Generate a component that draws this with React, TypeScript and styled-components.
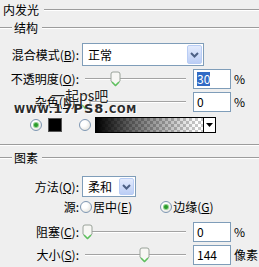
import React from 'react';
import styled, { createGlobalStyle } from 'styled-components';

const Global = createGlobalStyle`
  html, body { margin: 0; padding: 0; background: #efefef; }
  body {
    font-family: "Noto Sans CJK SC", "DejaVu Sans", sans-serif;
    font-size: 12px;
    color: #000;
  }
`;

const Panel = styled.div`
  position: relative;
  width: 259px;
  height: 267px;
  overflow: hidden;
  background: #efefef;
  display: flex;
  flex-direction: column;
`;

const Etched = styled.div`
  flex: 1;
  height: 0;
  border-top: 1px solid #9c9c9c;
  border-bottom: 1px solid #ffffff;
`;

const LeadLine = styled(Etched)`
  flex: 0 0 12px;
`;

const TitleRow = styled.div`
  height: 20px;
  display: flex;
  align-items: center;
  padding-left: 3px;
  gap: 5px;
  line-height: 14px;
`;

const GroupHead = styled.div<{ $mt: number }>`
  margin-top: ${(p) => p.$mt}px;
  height: 16px;
  display: flex;
  align-items: center;
  line-height: 14px;
`;

const GroupLabel = styled.span`
  padding: 0 4px 0 2px;
`;

const Separator = styled.div<{ $mt: number }>`
  margin-top: ${(p) => p.$mt}px;
  border-top: 1px solid #9c9c9c;
  border-bottom: 1px solid #ffffff;
`;

const Row = styled.div<{ $mt: number; $h: number; $pl?: number }>`
  margin-top: ${(p) => p.$mt}px;
  height: ${(p) => p.$h}px;
  padding-left: ${(p) => p.$pl ?? 0}px;
  display: flex;
  align-items: center;
  line-height: 14px;
  flex: none;
`;

const Label = styled.span`
  width: 79px;
  flex: none;
  text-align: right;
  white-space: nowrap;
`;

const U = styled.span`
  text-decoration: underline;
  text-underline-offset: 1px;
`;

const Select = styled.div<{ $w: number }>`
  margin-left: 3px;
  width: ${(p) => p.$w}px;
  height: 100%;
  box-sizing: border-box;
  border: 1px solid #7f9db9;
  background: #fff;
  display: flex;
  align-items: center;
  padding-left: 5px;
`;

const SelectBtn = styled.div`
  margin-left: auto;
  margin-right: 1px;
  width: 15px;
  height: calc(100% - 2px);
  box-sizing: border-box;
  border: 1px solid #b9cdf5;
  border-radius: 2px;
  background: linear-gradient(#e3ebfd, #bccef5);
  display: flex;
  align-items: center;
  justify-content: center;
`;

const SliderBox = styled.div`
  position: relative;
  margin-left: 6px;
  width: 101px;
  height: 100%;
  display: flex;
  align-items: center;
`;

const Track = styled.div`
  width: 100%;
  border-top: 1px solid #a3a3a3;
  border-bottom: 1px solid #ffffff;
`;

const Thumb = styled.svg`
  position: absolute;
  top: 50%;
  margin-top: -8px;
  margin-left: -5px;
`;

const NumBox = styled.div`
  margin-left: 7px;
  width: 38px;
  height: 100%;
  box-sizing: border-box;
  border: 1px solid #7f9db9;
  background: #fff;
  display: flex;
  align-items: center;
  padding-left: 3px;
`;

const Selected = styled.span`
  background: #316ac5;
  color: #fff;
`;

const Unit = styled.span`
  margin-left: 3px;
`;

const Radio = styled.span<{ $on?: boolean; $ml: number }>`
  margin-left: ${(p) => p.$ml}px;
  width: 12px;
  height: 12px;
  box-sizing: border-box;
  border-radius: 50%;
  border: 1px solid #7e97b3;
  background: radial-gradient(circle at 35% 35%, #ffffff 30%, #dcdad2 100%);
  display: flex;
  align-items: center;
  justify-content: center;
  flex: none;
  &::after {
    content: '';
    display: ${(p) => (p.$on ? 'block' : 'none')};
    width: 4px;
    height: 4px;
    border-radius: 50%;
    background: #2b9b2b;
    box-shadow: 0 0 0 1px #8ed08e;
  }
`;

const RadioText = styled.span`
  margin-left: 1px;
  white-space: nowrap;
`;

const Swatch = styled.div`
  margin-left: 6px;
  width: 14px;
  height: 14px;
  box-sizing: border-box;
  border: 1px solid #555;
  background: #000;
`;

const GradientBox = styled.div`
  margin-left: 4px;
  width: 121px;
  height: 100%;
  box-sizing: border-box;
  border: 1px solid #000;
  display: flex;
  background:
    linear-gradient(to right, #000 0%, rgba(0,0,0,0.6) 30%, rgba(0,0,0,0) 85%),
    repeating-conic-gradient(#c8c8c8 0 25%, #ffffff 0 50%) 0 0 / 6px 6px;
`;

const GradientBtn = styled.div`
  margin-left: auto;
  width: 12px;
  height: 100%;
  box-sizing: border-box;
  border-left: 1px solid #000;
  background: #fff;
  display: flex;
  align-items: center;
  justify-content: center;
`;

const Watermark = styled.div`
  position: absolute;
  left: 14px;
  top: 87px;
  pointer-events: none;
  display: flex;
  flex-direction: column;
`;

const WmTop = styled.div`
  margin-left: 37px;
  font-size: 14px;
  line-height: 16px;
  color: #222;
  text-shadow: 0 0 2px #fff;
`;

const WmBottom = styled.div`
  display: flex;
  align-items: baseline;
  font-family: "DejaVu Sans", sans-serif;
  font-weight: bold;
  color: #2a2a2a;
  text-shadow: 1px 1px 0 #fff;
  line-height: 12px;
`;

const WmSmall = styled.span`
  font-size: 10px;
  letter-spacing: 0.8px;
`;

const WmBig = styled.span`
  font-size: 13px;
  letter-spacing: 1px;
`;

const Chevron = () => (
  <svg width="9" height="6" viewBox="0 0 9 6">
    <path d="M1 1 L4.5 4.5 L8 1" fill="none" stroke="#4d6185" strokeWidth="2" />
  </svg>
);

const Slider: React.FC<{ value: number }> = ({ value }) => (
  <SliderBox>
    <Track />
    <Thumb width="11" height="16" viewBox="0 0 11 16" style={{ left: `${value}%` }}>
      <path d="M1 3 Q1 1 3 1 L8 1 Q10 1 10 3 L10 10 L5.5 15 L1 10 Z" fill="#f7f7f4" stroke="#9aa39a" />
      <path d="M2 11 L5.5 14.5 L9 11" fill="none" stroke="#5cc25c" strokeWidth="1.5" />
    </Thumb>
  </SliderBox>
);

export default function App() {
  return (
    <Panel>
      <Global />
      <TitleRow>
        <span>内发光</span>
        <Etched />
      </TitleRow>
      <GroupHead $mt={0}>
        <LeadLine />
        <GroupLabel>结构</GroupLabel>
        <Etched />
      </GroupHead>

      <Row $mt={7} $h={23}>
        <Label>混合模式(<U>B</U>):</Label>
        <Select $w={122}>
          正常
          <SelectBtn><Chevron /></SelectBtn>
        </Select>
      </Row>
      <Row $mt={3} $h={20}>
        <Label>不透明度(<U>O</U>):</Label>
        <Slider value={30} />
        <NumBox><Selected>30</Selected></NumBox>
        <Unit>%</Unit>
      </Row>
      <Row $mt={3} $h={20}>
        <Label>杂色(<U>N</U>):</Label>
        <Slider value={0} />
        <NumBox>0</NumBox>
        <Unit>%</Unit>
      </Row>
      <Row $mt={5} $h={16}>
        <Radio $on $ml={30} />
        <Swatch />
        <Radio $ml={17} />
        <GradientBox>
          <GradientBtn>
            <svg width="7" height="4" viewBox="0 0 7 4"><path d="M0 0 H7 L3.5 4 Z" fill="#000" /></svg>
          </GradientBtn>
        </GradientBox>
      </Row>

      <Separator $mt={11} />
      <GroupHead $mt={4}>
        <LeadLine />
        <GroupLabel>图素</GroupLabel>
        <Etched />
      </GroupHead>

      <Row $mt={10} $h={21}>
        <Label>方法(<U>Q</U>):</Label>
        <Select $w={54}>
          柔和
          <SelectBtn><Chevron /></SelectBtn>
        </Select>
      </Row>
      <Row $mt={3} $h={14}>
        <Label>源:</Label>
        <Radio $ml={1} />
        <RadioText>居中(<U>E</U>)</RadioText>
        <Radio $on $ml={28} />
        <RadioText>边缘(<U>G</U>)</RadioText>
      </Row>
      <Row $mt={8} $h={20}>
        <Label>阻塞(<U>C</U>):</Label>
        <Slider value={2} />
        <NumBox>0</NumBox>
        <Unit>%</Unit>
      </Row>
      <Row $mt={3} $h={20}>
        <Label>大小(<U>S</U>):</Label>
        <Slider value={58} />
        <NumBox>144</NumBox>
        <Unit>像素</Unit>
      </Row>

      <Watermark>
        <WmTop>一起ps吧</WmTop>
        <WmBottom>
          <WmSmall>WWW.</WmSmall>
          <WmBig>17PS8</WmBig>
          <WmSmall>.COM</WmSmall>
        </WmBottom>
      </Watermark>
    </Panel>
  );
}
